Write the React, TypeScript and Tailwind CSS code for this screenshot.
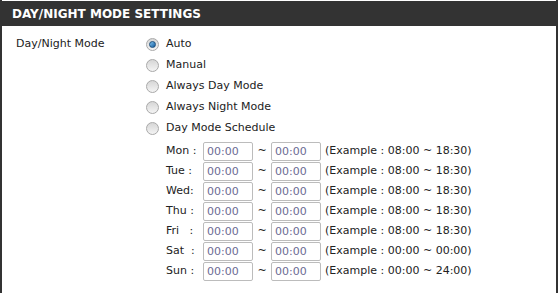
import React, { useState } from 'react';

const modes = ['Auto', 'Manual', 'Always Day Mode', 'Always Night Mode', 'Day Mode Schedule'];

const schedule = [
    { day: 'Mon\u00a0:', ex: '08:00 ~ 18:30' },
    { day: 'Tue\u00a0:', ex: '08:00 ~ 18:30' },
    { day: 'Wed:', ex: '08:00 ~ 18:30' },
    { day: 'Thu\u00a0:', ex: '08:00 ~ 18:30' },
    { day: 'Fri\u00a0\u00a0\u00a0:', ex: '08:00 ~ 18:30' },
    { day: 'Sat\u00a0\u00a0:', ex: '00:00 ~ 00:00' },
    { day: 'Sun\u00a0:', ex: '00:00 ~ 24:00' },
];

const Radio: React.FC<{ checked: boolean; onClick: () => void }> = ({ checked, onClick }) => (
    <button
        onClick={onClick}
        className="w-[13px] h-[13px] rounded-full border border-[#a9a9a9] bg-gradient-to-b from-[#d6d6d6] to-[#f4f4f4] flex items-center justify-center"
    >
        {checked && (
            <span className="w-[7px] h-[7px] rounded-full bg-gradient-to-br from-[#7fc4f0] to-[#0a5a9c] border border-[#1c4f7c]" />
        )}
    </button>
);

const TimeBox: React.FC = () => (
    <input
        defaultValue="00:00"
        className="w-[50px] h-[19px] border border-[#bcbcbc] rounded-[2px] px-[3px] text-[11px] text-[#6b6b93] bg-white outline-none"
    />
);

export default function App() {
    const [mode, setMode] = useState(0);

    return (
        <div className="w-[558px] h-[293px] bg-white font-['DejaVu_Sans',sans-serif] text-[11px] text-[#222]">
            <div className="h-full border-l-2 border-r-2 border-[#333] flex flex-col">
                <div className="h-[25px] mt-[1px] bg-[#333333] text-white font-bold text-[12px] flex items-center pl-[10px]">
                    DAY/NIGHT MODE SETTINGS
                </div>

                <div className="flex pl-[14px] pt-[9px]">
                    <div className="w-[130px] leading-[18px]">Day/Night Mode</div>
                    <div className="flex flex-col">
                        <div className="flex flex-col gap-[3px]">
                            {modes.map((m, i) => (
                                <label key={m} className="flex items-center h-[18px] gap-[7px] cursor-pointer">
                                    <Radio checked={mode === i} onClick={() => setMode(i)} />
                                    <span>{m}</span>
                                </label>
                            ))}
                        </div>

                        <div className="flex flex-col gap-[1px] pl-[20px] mt-[5px]">
                            {schedule.map(row => (
                                <div key={row.day} className="flex items-center h-[19px]">
                                    <span className="w-[37px] whitespace-pre">{row.day}</span>
                                    <TimeBox />
                                    <span className="w-[18px] text-center">~</span>
                                    <TimeBox />
                                    <span className="ml-[4px]">(Example : {row.ex})</span>
                                </div>
                            ))}
                        </div>
                    </div>
                </div>
            </div>
        </div>
    );
}
